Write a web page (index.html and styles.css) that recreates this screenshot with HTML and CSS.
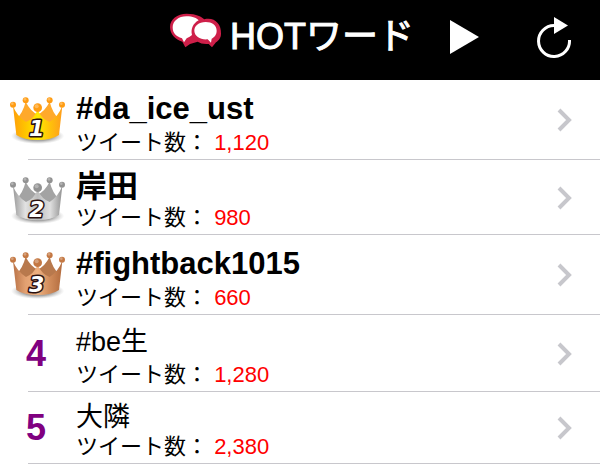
FILE: index.html
```html
<!DOCTYPE html>
<html lang="ja">
<head>
<meta charset="utf-8">
<meta name="viewport" content="width=device-width, initial-scale=1">
<title>HOTワード</title>
<link rel="stylesheet" href="styles.css">
</head>
<body>
<svg class="defs" width="0" height="0" aria-hidden="true">
  <defs>
    <linearGradient id="gold"><stop offset="0" stop-color="#ff9f0a"/><stop offset=".25" stop-color="#ffc400"/><stop offset=".5" stop-color="#ffe800"/><stop offset=".75" stop-color="#ffc20a"/><stop offset="1" stop-color="#ff9d1c"/></linearGradient>
    <linearGradient id="silver"><stop offset="0" stop-color="#9a9a9a"/><stop offset=".25" stop-color="#e2e2e2"/><stop offset=".5" stop-color="#bdbdbd"/><stop offset=".75" stop-color="#e0e0e0"/><stop offset="1" stop-color="#929292"/></linearGradient>
    <linearGradient id="bronze"><stop offset="0" stop-color="#b97348"/><stop offset=".25" stop-color="#e2a071"/><stop offset=".5" stop-color="#eeb080"/><stop offset=".75" stop-color="#d08b5a"/><stop offset="1" stop-color="#b26b3e"/></linearGradient>
    <radialGradient id="shade"><stop offset=".6" stop-color="#777" stop-opacity=".65"/><stop offset="1" stop-color="#aaa" stop-opacity="0"/></radialGradient>
    <symbol id="crown" viewBox="24 45 180 150">
      <ellipse cx="113" cy="168" rx="80" ry="24" fill="url(#shade)"/>
      <path class="crown-back" d="M50 115Q68 100 77 65Q92 95 113 103Q134 95 149 65Q158 100 176 115L113 146Z"/>
      <path d="M39 78Q52 110 78 126Q101 117 113 90Q125 117 149 126Q174 110 187 78L177 165Q155 180 113 180T49 165Z"/>
      <g class="crown-balls"><circle cx="39" cy="74" r="9"/><circle cx="77" cy="61" r="9"/><circle cx="113" cy="83" r="13"/><circle cx="149" cy="61" r="9"/><circle cx="186" cy="74" r="9"/></g>
      <g fill="#fff" opacity=".3"><circle cx="37" cy="71" r="4"/><circle cx="75" cy="58" r="4"/><circle cx="110" cy="79" r="6"/><circle cx="147" cy="58" r="4"/><circle cx="184" cy="71" r="4"/></g>
    </symbol>
    <symbol id="chevron" viewBox="0 0 16 24"><path d="M3 2 13 12 3 22" fill="none" stroke="#c7c7cc" stroke-width="4"/></symbol>
  </defs>
</svg>

<header class="bar">
  <svg class="logo" viewBox="0 0 156 104" aria-hidden="true">
    <path fill="#ce1f49" d="M50 0C80 0 95 10 103 17C133 10 154 30 153 60C153 73 146 80 138 86L126 101 116 91Q95 93 83 84L60 91 46 101 37 84C16 78 0 61 0 40C0 17 22 0 50 0Z"/>
    <path fill="#fff" d="M49 8C69 8 80 14 86 20C68 30 62 47 66 64Q60 70 50 74L42 86 36 74C18 69 8 58 8 41C8 22 26 8 49 8Z"/>
    <path fill="#fff" d="M107 25C126 25 140 35 140 51C140 64 132 71 125 75L123 87 113 77C91 79 74 68 73 52C72 37 86 25 107 25Z"/>
  </svg>
  <h1 class="bar-title">HOTワード</h1>
  <button class="icon-button play" type="button" aria-label="再生">
    <svg viewBox="0 0 30 36" width="30" height="36"><path fill="#fff" d="M0 1 29 18 0 35Z"/></svg>
  </button>
  <button class="icon-button reload" type="button" aria-label="更新">
    <svg viewBox="0 0 36 42" width="36" height="42"><path d="M18 9.500A15.500 15.500 0 1 0 33.500 24" fill="none" stroke="#fff" stroke-width="3"/><path fill="#fff" d="M18 1 32 9.500 18 18Z"/></svg>
  </button>
</header>

<main>
  <ol class="words">
    <li><a class="word top" href="#w1">
      <svg class="crown gold" viewBox="24 45 180 150"><use href="#crown" x="24" y="45" width="180" height="150"/><text class="crown-number" x="110" y="169">1</text></svg>
      <span class="body"><strong class="name">#da_ice_ust</strong><span class="tweets">ツイート数： <span class="count">1,120</span></span></span>
      <svg class="chevron"><use href="#chevron"/></svg>
    </a></li>
    <li><a class="word top" href="#w2">
      <svg class="crown silver" viewBox="24 45 180 150"><use href="#crown" x="24" y="45" width="180" height="150"/><text class="crown-number" x="110" y="172">2</text></svg>
      <span class="body"><strong class="name kanji">岸田</strong><span class="tweets">ツイート数： <span class="count">980</span></span></span>
      <svg class="chevron"><use href="#chevron"/></svg>
    </a></li>
    <li><a class="word top" href="#w3">
      <svg class="crown bronze" viewBox="24 45 180 150"><use href="#crown" x="24" y="45" width="180" height="150"/><text class="crown-number" x="110" y="172">3</text></svg>
      <span class="body"><strong class="name">#fightback1015</strong><span class="tweets">ツイート数： <span class="count">660</span></span></span>
      <svg class="chevron"><use href="#chevron"/></svg>
    </a></li>
    <li><a class="word" href="#w4">
      <span class="rank">4</span>
      <span class="body"><span class="name">#be生</span><span class="tweets">ツイート数： <span class="count">1,280</span></span></span>
      <svg class="chevron"><use href="#chevron"/></svg>
    </a></li>
    <li><a class="word" href="#w5">
      <span class="rank">5</span>
      <span class="body"><span class="name kanji">大隣</span><span class="tweets">ツイート数： <span class="count">2,380</span></span></span>
      <svg class="chevron"><use href="#chevron"/></svg>
    </a></li>
  </ol>
</main>
</body>
</html>
```
FILE: styles.css
```css
* { box-sizing: border-box; }

body {
  margin: 0;
  background: #fff;
  color: #000;
  font-family: "Liberation Sans", "Noto Sans CJK JP", sans-serif;
}

.defs { position: absolute; }

.bar {
  display: flex;
  align-items: center;
  justify-content: flex-end;
  height: 80px;
  padding: 0 28px 6px 0;
  background: #000;
  color: #fff;
}

.logo {
  width: 52px;
  height: 36px;
  margin: 0 8px 12px 0;
}

.bar-title {
  margin: 0 36px 0 0;
  font-size: 36px;
  font-weight: normal;
  line-height: 52px;
  -webkit-text-stroke: 1px #fff;
}

.icon-button {
  display: flex;
  padding: 0;
  border: 0;
  background: none;
}

.play { margin-right: 56px; }

.words {
  margin: 0;
  padding: 0;
  list-style: none;
}

.word {
  position: relative;
  display: grid;
  grid-template-columns: 76px 1fr auto;
  align-items: center;
  padding: 4px 28px 4px 0;
  color: inherit;
  text-decoration: none;
}

.word::after {
  content: "";
  position: absolute;
  inset: auto 0 0 28px;
  border-bottom: 1px solid #c8c7cc;
}

.crown {
  width: 60px;
  height: 50px;
  margin: 11px 0 0 8px;
  align-self: start;
}

.crown-number {
  fill: #fff;
  stroke: #2a1010;
  stroke-width: 9px;
  stroke-linejoin: round;
  paint-order: stroke;
  font: italic bold 66px "DejaVu Sans", sans-serif;
  text-anchor: middle;
}

.gold { fill: url(#gold); --back: #ffa92b; --ball: #ff9c12; }
.silver { fill: url(#silver); --back: #a3a3a3; --ball: #929292; }
.bronze { fill: url(#bronze); --back: #b8794d; --ball: #c47843; }
.crown-back { fill: var(--back); }
.crown-balls { fill: var(--ball); }

.rank {
  padding-left: 26px;
  color: #800080;
  font-size: 36px;
  font-weight: bold;
  line-height: 40px;
}

.body {
  display: flex;
  flex-direction: column;
  padding-top: 4px;
}

.name {
  font-size: 27px;
  line-height: 39px;
}

.top .name {
  font-size: 31px;
  line-height: 42px;
}

.name.kanji { line-height: 34px; }
.top .name.kanji { line-height: 37px; }

.tweets {
  font-size: 22px;
  line-height: 26px;
}

.count { color: #f00; }

.chevron {
  width: 16px;
  height: 24px;
}
```
